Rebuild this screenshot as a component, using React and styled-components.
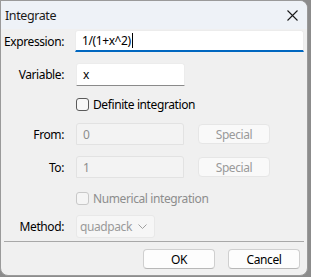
import React from "react";
import styled, { createGlobalStyle } from "styled-components";

const Global = createGlobalStyle`
  html, body {
    margin: 0;
    padding: 0;
    background: #8c8c8c;
    width: 311px;
    height: 277px;
    overflow: hidden;
  }
`

const Window = styled.div`
  width: 306px;
  height: 274px;
  border: 1px solid #9a9a9a;
  border-radius: 0 8px 8px 8px;
  background: #f0f0f0;
  overflow: hidden;
  font-family: "Noto Sans", "Open Sans", sans-serif;
  font-size: 12px;
  letter-spacing: -0.4px;
  color: #000;
  display: flex;
  flex-direction: column;
`

const TitleBar = styled.div`
  height: 28px;
  flex: none;
  background: #eef2f7;
  display: flex;
  align-items: center;
  justify-content: space-between;
  padding: 0 6px 0 4px;
`

const Title = styled.span`
  font-size: 12.5px;
  color: #1a1a1a;
`

const Close = styled.div`
  width: 12px;
  height: 12px;
  display: flex;
  align-items: center;
  justify-content: center;
  margin-right: 3px;
`

const Body = styled.div`
  display: flex;
  flex-direction: column;
  padding: 1px 3px 0 0;
`

const Row = styled.div`
  display: grid;
  grid-template-columns: 58px 1fr;
  column-gap: 12px;
  align-items: center;
  padding-left: 5px;
  margin-top: ${p => p.$top || 0}px;
`

const Label = styled.label`
  text-align: right;
  white-space: nowrap;
  display: flex;
  justify-content: flex-end;
`

const Field = styled.div`
  display: flex;
  align-items: center;
  gap: 14px;
  margin-left: ${p => p.$shift || 0}px;
`

const Input = styled.div`
  box-sizing: border-box;
  width: ${p => p.$width ? p.$width + "px" : "100%"};
  height: ${p => p.$height || 22}px;
  padding-left: 6px;
  display: flex;
  align-items: center;
  background: ${p => p.$disabled ? "#f3f3f3" : "#fff"};
  border: 1px solid ${p => p.$disabled ? "#e2e2e2" : "#ececec"};
  border-bottom: ${p => p.$focused ? "2px solid #0067c0" : p.$disabled ? "1px solid #e2e2e2" : "1px solid #8a8a8a"};
  border-radius: 3px 3px 0 0;
  color: ${p => p.$disabled ? "#8d8d8d" : "#000"};
`

const Caret = styled.span`
  display: inline-block;
  width: 1px;
  height: 15px;
  background: #000;
  margin-left: 1px;
`

const CheckRow = styled.label`
  display: flex;
  align-items: center;
  gap: 4px;
  height: 16px;
  color: ${p => p.$disabled ? "#8d8d8d" : "#000"};
`

const Box = styled.span`
  box-sizing: border-box;
  width: 13px;
  height: 13px;
  border-radius: 3px;
  border: 1px solid ${p => p.$disabled ? "#c8c8c8" : "#5a5a5a"};
  background: ${p => p.$disabled ? "#f5f5f5" : "#f7f7f7"};
`

const Special = styled.div`
  box-sizing: border-box;
  width: 72px;
  height: 20px;
  border: 1px solid #e6e6e6;
  border-radius: 4px;
  background: #f9f9f9;
  color: #9a9a9a;
  display: flex;
  align-items: center;
  justify-content: center;
`

const Select = styled.div`
  box-sizing: border-box;
  width: 79px;
  height: 23px;
  padding: 0 7px 0 3px;
  border: 1px solid #e8e8e8;
  border-radius: 3px;
  background: #f6f6f6;
  color: #9a9a9a;
  display: flex;
  align-items: center;
  justify-content: space-between;
`

const Separator = styled.div`
  height: 1px;
  background: #a8a8a8;
  margin: 3px 0 0 3px;
`

const Footer = styled.div`
  display: flex;
  justify-content: flex-end;
  gap: 13px;
  padding: 7px 4px 0 0;
`

const Button = styled.div`
  box-sizing: border-box;
  width: 72px;
  height: 20px;
  border: 1px solid #cfcfcf;
  border-bottom-color: #b8b8b8;
  border-radius: 4px;
  background: #fdfdfd;
  display: flex;
  align-items: center;
  justify-content: center;
`

export default function App() {
  return (
    <>
      <Global />
      <Window>
        <TitleBar>
          <Title>Integrate</Title>
          <Close>
            <svg width="11" height="11" viewBox="0 0 11 11">
              <path d="M0.5 0.5 L10.5 10.5 M10.5 0.5 L0.5 10.5" stroke="#1a1a1a" strokeWidth="1.1" />
            </svg>
          </Close>
        </TitleBar>
        <Body>
          <Row>
            <Label>Expression:</Label>
            <Field $shift={-1}>
              <Input $focused>1/(1+x^2)<Caret /></Input>
            </Field>
          </Row>
          <Row $top={11}>
            <Label>Variable:</Label>
            <Field>
              <Input $width={109} $height={23}>x</Input>
            </Field>
          </Row>
          <Row $top={10}>
            <span />
            <CheckRow><Box />Definite integration</CheckRow>
          </Row>
          <Row $top={11}>
            <Label>From:</Label>
            <Field>
              <Input $width={108} $disabled>0</Input>
              <Special>Special</Special>
            </Field>
          </Row>
          <Row $top={11}>
            <Label>To:</Label>
            <Field>
              <Input $width={108} $disabled>1</Input>
              <Special>Special</Special>
            </Field>
          </Row>
          <Row $top={12}>
            <span />
            <CheckRow $disabled><Box $disabled />Numerical integration</CheckRow>
          </Row>
          <Row $top={9}>
            <Label>Method:</Label>
            <Field>
              <Select>
                quadpack
                <svg width="9" height="6" viewBox="0 0 9 6">
                  <path d="M0.5 0.5 L4.5 4.5 L8.5 0.5" fill="none" stroke="#a0a0a0" strokeWidth="1" />
                </svg>
              </Select>
            </Field>
          </Row>
          <Separator />
          <Footer>
            <Button>OK</Button>
            <Button>Cancel</Button>
          </Footer>
        </Body>
      </Window>
    </>
  );
}
